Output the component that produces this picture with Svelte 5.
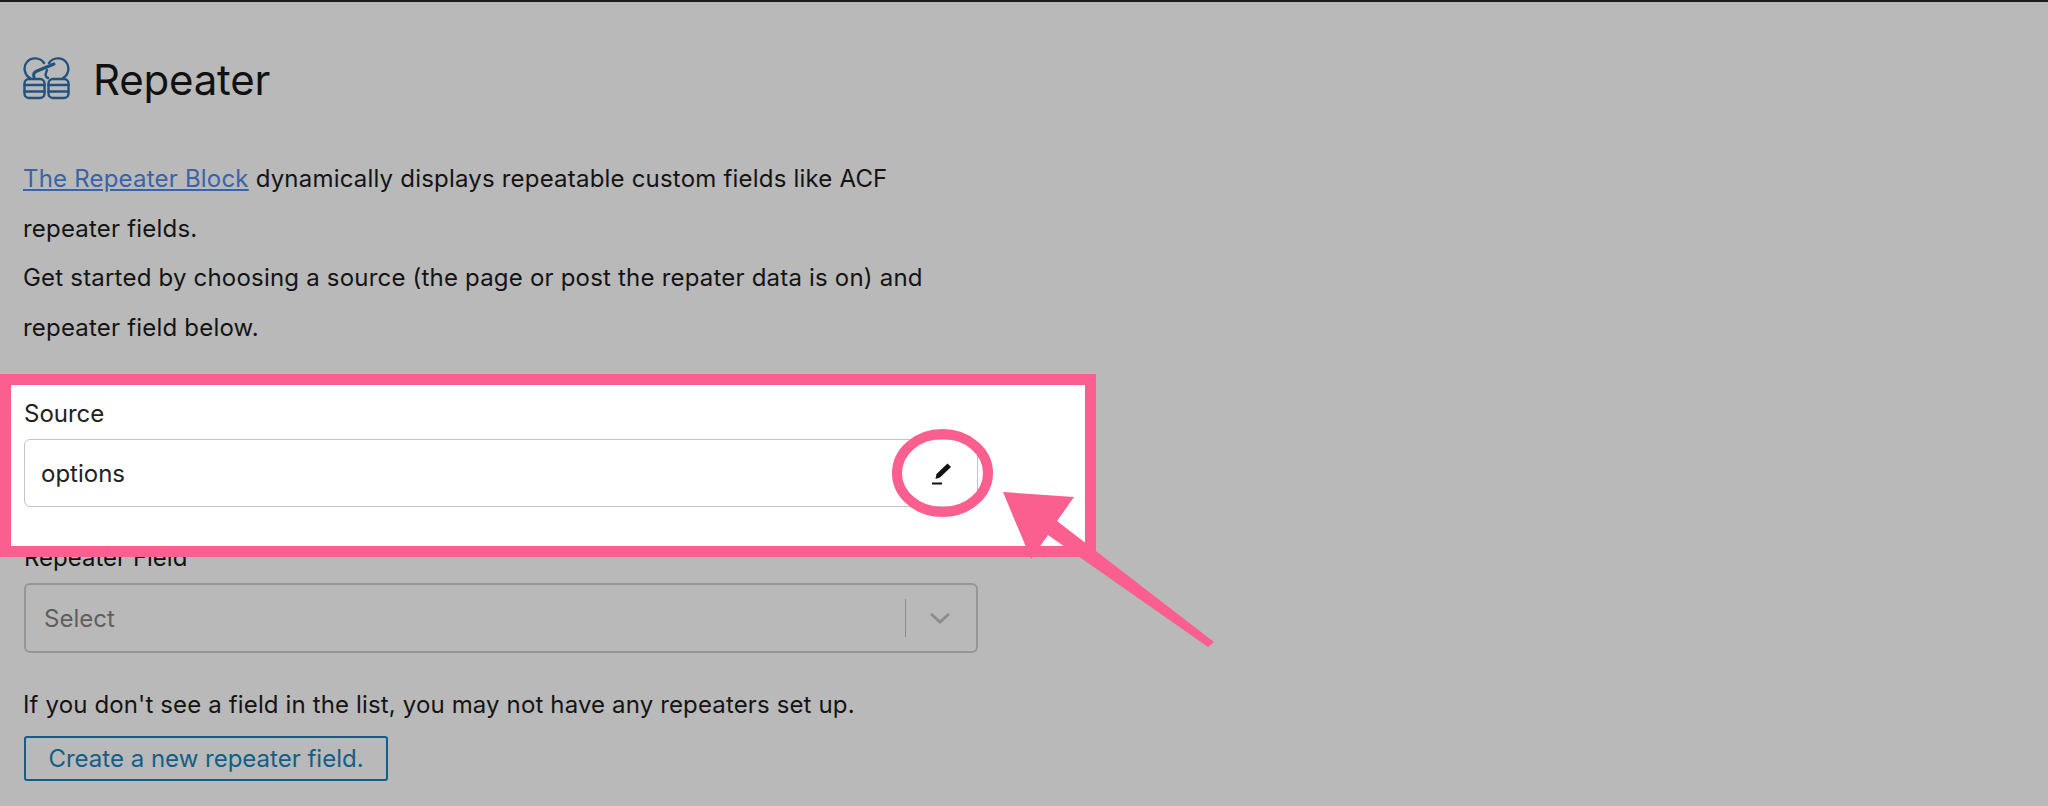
<script>
  // Repeater block settings panel, dimmed, with the Source field called out in pink.
  const intro = "dynamically displays repeatable custom fields like ACF repeater fields.";
  const start = "Get started by choosing a source (the page or post the repater data is on) and repeater field below.";
</script>

<div class="page">
  <header class="title">
    <svg class="logo" viewBox="0 0 48 44" fill="none" stroke="#24527f" stroke-width="2.4" stroke-linecap="round" stroke-linejoin="round">
      <path d="M7 21 C1 18 0 9 4 5 C8 0 17 0 21 6" />
      <path d="M24 13 C22 18 22 20 25 21" />
      <path d="M26 6 C30 0 39 0 43 5 C47 9 46 18 40 21" />
      <path d="M11 20 C10 17 11 15 14 14 L31 7" stroke-width="3" />
      <rect x="1.5" y="22" width="20" height="19" rx="4.5" />
      <path d="M1.5 28 H21.5 M1.5 34.5 H21.5" />
      <rect x="25.5" y="22" width="20" height="19" rx="4.5" />
      <path d="M25.5 28 H45.5 M25.5 34.5 H45.5" />
    </svg>
    <h1>Repeater</h1>
  </header>

  <div class="intro">
    <p><a href="#block">The Repeater Block</a> {intro}</p>
    <p>{start}</p>
  </div>

  <section class="callout">
    <span class="label">Source</span>
    <div class="input">
      <span>options</span>
      <svg class="pencil" viewBox="0 0 20 22" fill="#111">
        <path d="M15.5 0.5 L19 4 L8 14.5 L3.5 16 L4.5 11 Z" />
        <rect x="0" y="19.5" width="10" height="2" />
      </svg>
    </div>
  </section>

  <span class="label behind">Repeater Field</span>
  <div class="select">
    <span class="placeholder">Select</span>
    <span class="sep"></span>
    <svg class="chev" viewBox="0 0 22 12" fill="none" stroke="#8c8c8c" stroke-width="3">
      <path d="M2 2 L11 10 L20 2" />
    </svg>
  </div>

  <p class="hint">If you don't see a field in the list, you may not have any repeaters set up.</p>
  <button class="create" type="button">Create a new repeater field.</button>

  <svg class="marks" width="1240" height="660" viewBox="0 0 1240 660">
    <ellipse cx="942.5" cy="473" rx="45.5" ry="39" fill="none" stroke="#fb5f8f" stroke-width="10" />
    <path d="M1003 492 L1074 497 L1057 521 L1214 642 L1208 647 L1048 535 L1031 559 Z" fill="#fb5f8f" />
  </svg>
</div>

<style>
  :global(body) { margin: 0; background: #b9b9b9; }
  .page {
    position: relative; box-sizing: border-box; height: 806px; overflow: hidden;
    padding: 0 24px; background: #b9b9b9; border-top: 2px solid #1c1c1c;
    font-family: Inter, "Liberation Sans", sans-serif; color: #141414;
  }
  .title { display: flex; align-items: center; gap: 22px; margin: 52px 0 0 -1px; height: 50px; }
  .logo { width: 48px; height: 44px; flex: none; }
  h1 { margin: 0; font-size: 42px; font-weight: 400; letter-spacing: -0.2px; color: #111; }
  .intro { width: 950px; margin: 50px 0 0 -1px; font-size: 24px; line-height: 49.5px; letter-spacing: 0.2px; }
  .intro p { margin: 0; }
  .intro a { color: #3a63a8; text-decoration: underline; }

  .callout {
    position: relative; z-index: 1; box-sizing: border-box;
    width: 1096px; height: 183px; margin: 22px 0 -14px -24px;
    padding: 14px 0 0 13px; background: #fff; border: 11px solid #fb5f8f;
  }
  .label { display: block; font-size: 24px; line-height: 30px; color: #222; }
  .input {
    box-sizing: border-box; display: flex; align-items: center; justify-content: space-between;
    width: 954px; height: 68px; margin-top: 10px; padding: 0 25px 0 16px;
    border: 1px solid #c4c4c4; border-radius: 6px; font-size: 24px; color: #222;
  }
  .pencil { width: 20px; height: 22px; margin-bottom: -1px; }

  .behind { color: #111; }
  .select {
    box-sizing: border-box; display: flex; align-items: center;
    width: 954px; height: 70px; margin-top: 10px; padding-left: 18px;
    border: 2px solid #969696; border-radius: 6px;
  }
  .placeholder { flex: 1; font-size: 24px; color: #5f5f5f; }
  .sep { width: 1px; height: 38px; background: #8c8c8c; }
  .chev { width: 22px; height: 12px; margin: 0 25px 0 23px; }

  .hint { margin: 37px 0 0 -1px; font-size: 24px; line-height: 30px; letter-spacing: 0.14px; color: #141414; }
  .create {
    display: block; box-sizing: border-box; width: 364px; height: 45px; margin-top: 16px; padding: 0;
    background: transparent; border: 2px solid #135e87; border-radius: 3px;
    font: 400 24px Inter, "Liberation Sans", sans-serif; color: #135e87;
  }
  .marks { position: absolute; left: 0; top: -2px; z-index: 2; pointer-events: none; }
</style>
